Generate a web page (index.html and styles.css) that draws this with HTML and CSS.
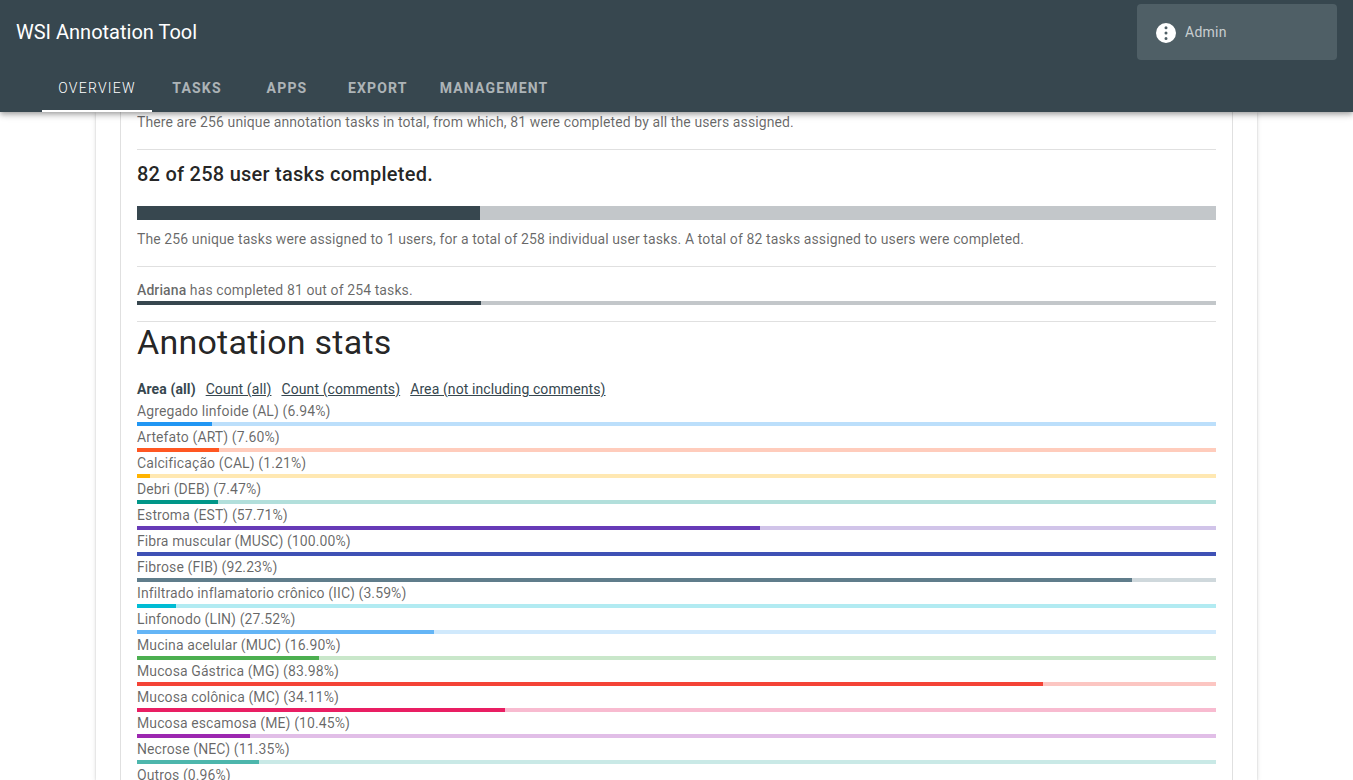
FILE: index.html
```
<!DOCTYPE html>
<html lang="en">
<head>
<meta charset="utf-8">
<title>WSI Annotation Tool</title>
<link rel="stylesheet" href="styles.css">
</head>
<body>
<header class="app-bar">
  <div class="toolbar">
    <div class="toolbar-title">WSI Annotation Tool</div>
    <button class="user-menu" type="button">
      <svg class="user-icon" viewBox="0 0 24 24"><path fill="currentColor" fill-rule="evenodd" d="M12 2a10 10 0 1 1 0 20a10 10 0 0 1 0-20zM12 5.2a1.5 1.5 0 1 0 0 3a1.5 1.5 0 0 0 0-3zM12 10.5a1.5 1.5 0 1 0 0 3a1.5 1.5 0 0 0 0-3zM12 16a1.5 1.5 0 1 0 0 3a1.5 1.5 0 0 0 0-3z"/></svg>
      <span>Admin</span>
    </button>
  </div>
  <nav class="tabs">
    <a class="tab active">Overview</a>
    <a class="tab">Tasks</a>
    <a class="tab">Apps</a>
    <a class="tab">Export</a>
    <a class="tab">Management</a>
  </nav>
</header>
<main class="page">
  <section class="card">
    <div class="panel">
      <p class="text">There are 256 unique annotation tasks in total, from which, 81 were completed by all the users assigned.</p>
      <hr class="divider">
      <h2 class="subtitle">82 of 258 user tasks completed.</h2>
      <div class="bar tall primary"><div class="fill" style="width:31.78%"></div></div>
      <p class="text">The 256 unique tasks were assigned to 1 users, for a total of 258 individual user tasks. A total of 82 tasks assigned to users were completed.</p>
      <hr class="divider">
      <p class="text user"><strong>Adriana</strong> has completed 81 out of 254 tasks.</p>
      <div class="bar primary"><div class="fill" style="width:31.89%"></div></div>
      <hr class="divider">
      <h1 class="heading">Annotation stats</h1>
      <div class="filters">
        <strong>Area (all)</strong>
        <a>Count (all)</a>
        <a>Count (comments)</a>
        <a>Area (not including comments)</a>
      </div>
      <div class="stats">
        <p>Agregado linfoide (AL) (6.94%)</p>
        <div class="bar blue"><div class="fill" style="width:6.94%"></div></div>
        <p>Artefato (ART) (7.60%)</p>
        <div class="bar deep-orange"><div class="fill" style="width:7.6%"></div></div>
        <p>Calcificação (CAL) (1.21%)</p>
        <div class="bar amber"><div class="fill" style="width:1.21%"></div></div>
        <p>Debri (DEB) (7.47%)</p>
        <div class="bar teal"><div class="fill" style="width:7.47%"></div></div>
        <p>Estroma (EST) (57.71%)</p>
        <div class="bar deep-purple"><div class="fill" style="width:57.71%"></div></div>
        <p>Fibra muscular (MUSC) (100.00%)</p>
        <div class="bar indigo"><div class="fill" style="width:100%"></div></div>
        <p>Fibrose (FIB) (92.23%)</p>
        <div class="bar blue-grey"><div class="fill" style="width:92.23%"></div></div>
        <p>Infiltrado inflamatorio crônico (IIC) (3.59%)</p>
        <div class="bar cyan"><div class="fill" style="width:3.59%"></div></div>
        <p>Linfonodo (LIN) (27.52%)</p>
        <div class="bar light-blue"><div class="fill" style="width:27.52%"></div></div>
        <p>Mucina acelular (MUC) (16.90%)</p>
        <div class="bar green"><div class="fill" style="width:16.9%"></div></div>
        <p>Mucosa Gástrica (MG) (83.98%)</p>
        <div class="bar red"><div class="fill" style="width:83.98%"></div></div>
        <p>Mucosa colônica (MC) (34.11%)</p>
        <div class="bar pink"><div class="fill" style="width:34.11%"></div></div>
        <p>Mucosa escamosa (ME) (10.45%)</p>
        <div class="bar purple"><div class="fill" style="width:10.45%"></div></div>
        <p>Necrose (NEC) (11.35%)</p>
        <div class="bar light-teal"><div class="fill" style="width:11.35%"></div></div>
        <p>Outros (0.96%)</p>
      </div>
    </div>
  </section>
</main>
</body>
</html>
```
FILE: styles.css
```
* { box-sizing: border-box; }
body {
  margin: 0;
  height: 780px;
  overflow: hidden;
  display: flex;
  flex-direction: column;
  background: #fff;
  color: rgba(0, 0, 0, .87);
  font-family: Roboto, sans-serif;
  font-size: 14px;
}
p, h1, h2 { margin: 0; }
strong { font-weight: 500; }

.app-bar {
  position: relative;
  z-index: 1;
  flex: none;
  height: 112px;
  background: #37474f;
  color: #fff;
  box-shadow: 0 2px 4px -1px rgba(0,0,0,.2), 0 4px 5px 0 rgba(0,0,0,.14), 0 1px 10px 0 rgba(0,0,0,.12);
}
.toolbar {
  display: flex;
  align-items: center;
  justify-content: space-between;
  height: 64px;
  padding: 0 16px;
}
.toolbar-title { font-size: 20px; line-height: 30px; }
.user-menu {
  display: flex;
  align-items: center;
  gap: 7px;
  width: 200px;
  height: 56px;
  padding: 0 17px;
  border: 0;
  border-radius: 4px;
  background: #4f5f66;
  color: rgba(255, 255, 255, .7);
  font: 400 14px/22px Roboto, sans-serif;
  letter-spacing: .25px;
}
.user-icon { width: 24px; height: 24px; margin-top: 2px; color: #fff; }
.tabs { display: flex; height: 48px; padding-left: 42px; }
.tab {
  display: flex;
  align-items: center;
  justify-content: center;
  min-width: 90px;
  padding: 2px 16px 0;
  border-bottom: 2px solid transparent;
  color: rgba(255, 255, 255, .6);
  font-weight: 700;
  letter-spacing: 1.17px;
  text-transform: uppercase;
}
.tab.active { width: 110px; color: #fff; border-bottom-color: #fff; font-weight: 300; letter-spacing: 1.25px; }

.page { flex: 1; min-height: 0; margin-top: -1px; padding: 0 96px; }
.card {
  height: 100%;
  padding: 0 24px;
  box-shadow: 0 3px 1px -2px rgba(0,0,0,.2), 0 2px 2px 0 rgba(0,0,0,.14), 0 1px 5px 0 rgba(0,0,0,.12);
}
.panel {
  height: 100%;
  overflow: hidden;
  padding: 0 16px;
  border: solid rgba(0, 0, 0, .12);
  border-width: 0 1px;
}
.text, .stats, .filters {
  line-height: 22px;
  letter-spacing: .0071428571em;
  color: rgba(0, 0, 0, .6);
}
.divider { margin: 16px 0 0; border: 0; border-top: 1px solid rgba(0, 0, 0, .12); }
.subtitle {
  margin: 8px 0 16px;
  font-size: 20px;
  font-weight: 500;
  line-height: 32px;
  letter-spacing: .0125em;
}
.user { margin-top: 12px; }
.heading {
  margin-bottom: 16px;
  font-size: 34px;
  font-weight: 400;
  line-height: 40px;
  letter-spacing: .0073529412em;
}
.filters { display: flex; gap: 10px; color: #37474f; }
.filters strong { font-weight: 700; }
.filters a { text-decoration: underline; }

.bar { height: 4px; background: color-mix(in srgb, var(--color) 30%, transparent); }
.bar.tall { height: 14px; margin-bottom: 8px; }
.fill { height: 100%; background: var(--color); }
.primary { --color: #37474f; }
.blue { --color: #2196f3; }
.deep-orange { --color: #ff5722; }
.amber { --color: #ffb300; }
.teal { --color: #009688; }
.deep-purple { --color: #673ab7; }
.indigo { --color: #3f51b5; }
.blue-grey { --color: #607d8b; }
.cyan { --color: #00bcd4; }
.light-blue { --color: #64b5f6; }
.green { --color: #4caf50; }
.red { --color: #f44336; }
.pink { --color: #e91e63; }
.purple { --color: #9c27b0; }
.light-teal { --color: #4db6ac; }
```
